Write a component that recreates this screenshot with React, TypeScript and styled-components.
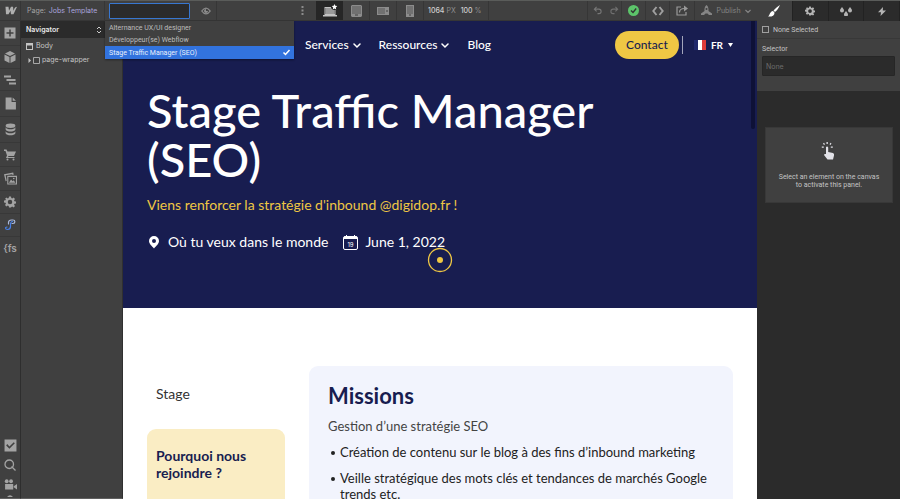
import React from "react";
import styled, { createGlobalStyle } from "styled-components";

const ui = `Inter, "Liberation Sans", sans-serif`;
const uiNarrow = `Roboto, "Liberation Sans", sans-serif`;
const site = `Lato, "Open Sans", sans-serif`;

const GlobalStyle = createGlobalStyle`
  *, *::before, *::after { box-sizing: border-box; }
  body { margin: 0; background: #2b2b2b; font-family: ${ui}; }
  button { border: 0; padding: 0; background: none; color: inherit; font: inherit; cursor: pointer; }
  ul, h1, h2, h3, p { margin: 0; padding: 0; list-style: none; font-weight: inherit; }
  a { color: inherit; text-decoration: none; }
`;

const Shell = styled.div`
  display: flex;
  height: 100vh;
  overflow: hidden;
  border-top: 1px solid #5a5c5a;
  color: #c4c4c4;
  font-size: 7px;
  line-height: 10px;
`;
const Workspace = styled.div`
  flex: 1;
  min-width: 0;
  display: flex;
  flex-direction: column;
`;
const TopBar = styled.header`
  display: flex;
  flex: none;
  height: 20px;
  background: #404040;
  border-bottom: 1px solid #363636;
`;
const Body = styled.div`
  flex: 1;
  min-height: 0;
  display: flex;
`;
const Cell = styled.div<{ $w: number }>`
  flex: none;
  width: ${(p) => p.$w}px;
`;
const BarButton = styled.button<{ $w: number; $line?: boolean; $active?: boolean; $color?: string }>`
  display: flex;
  flex: none;
  align-items: center;
  justify-content: center;
  gap: 4px;
  width: ${(p) => p.$w}px;
  border-right: ${(p) => (p.$line ? "1px solid #363636" : "0")};
  background: ${(p) => (p.$active ? "#262626" : "transparent")};
  color: ${(p) => p.$color || "#8c8c8c"};
`;
const Spacer = styled.div`
  flex: 1;
  border-right: 1px solid #363636;
`;
const PageLabel = styled.div`
  display: flex;
  flex: none;
  align-items: center;
  gap: 3px;
  width: 84px;
  padding-left: 6px;
  border-right: 1px solid #363636;
  color: #a4a4a4;
  white-space: nowrap;
`;
const PageName = styled.span`
  color: #aaa5dc;
`;
const Picker = styled.div`
  position: relative;
  flex: none;
  width: 90px;
  padding: 2px 4px;
`;
const PickerInput = styled.input`
  display: block;
  width: 81px;
  height: 16px;
  padding: 0 4px;
  border: 1px solid #3877d0;
  border-radius: 1px;
  outline: 0;
  background: #2b2b2b;
  color: #ddd;
  font: 7px ${ui};
`;
const Options = styled.ul`
  position: absolute;
  z-index: 5;
  top: 20px;
  left: 0;
  width: 189px;
  padding-top: 1px;
  background: #404040;
  color: #bdbdbd;
  box-shadow: 0 1px 2px rgba(0, 0, 0, 0.4);
  font-family: ${uiNarrow};
`;
const Option = styled.li<{ $selected?: boolean }>`
  display: flex;
  align-items: center;
  justify-content: space-between;
  height: ${(p) => (p.$selected ? 13 : 12)}px;
  padding: 0 3px 0 4px;
  background: ${(p) => (p.$selected ? "#3273de" : "transparent")};
  color: ${(p) => (p.$selected ? "#e8effc" : "inherit")};
`;
const Size = styled.div`
  display: flex;
  flex: none;
  align-items: center;
  gap: 5px;
  width: 65px;
  padding-left: 4px;
  border-right: 1px solid #363636;
  color: #8e8e8e;
  white-space: nowrap;
  b { font-weight: 500; color: #d0d0d0; }
`;
const Rail = styled.nav`
  display: flex;
  flex: none;
  flex-direction: column;
  width: 21px;
  background: #404040;
  border-right: 1px solid #2e2e2e;
  border-bottom: 1px solid #606060;
  overflow: hidden;
`;
const RailButton = styled.button<{ $h: number; $plain?: boolean }>`
  display: flex;
  flex: none;
  align-items: center;
  justify-content: center;
  height: ${(p) => p.$h}px;
  border-bottom: ${(p) => (p.$plain ? "0" : "1px solid #383838")};
  color: #a3a3a3;
  font-size: 10px;
  font-weight: 600;
`;
const RailGap = styled.div`
  flex: 1;
`;
const Navigator = styled.aside`
  flex: none;
  width: 102px;
  background: #404040;
  border-bottom: 1px solid #606060;
  border-right: 1px solid #303030;
`;
const NavHead = styled.h2`
  display: flex;
  align-items: center;
  justify-content: space-between;
  height: 17px;
  padding: 0 20px 0 5px;
  background: #2b2b2b;
  color: #e8e8e8;
  font-size: 7px;
  font-weight: 600;
`;
const TreeRow = styled.div<{ $depth?: number }>`
  display: flex;
  align-items: center;
  gap: ${(p) => (p.$depth ? 2 : 3)}px;
  height: 14px;
  padding-left: ${(p) => (p.$depth ? 7 : 5)}px;
`;
const Tree = styled.div`
  padding-top: 1px;
`;

/* canvas */
const Canvas = styled.main`
  position: relative;
  flex: 1;
  min-width: 0;
  overflow: hidden;
  background: #fff;
  color: #333;
  font-family: ${site};
`;
const ScrollThumb = styled.div`
  position: absolute;
  top: 0;
  right: 2px;
  width: 4px;
  height: 108px;
  border-radius: 0 0 2px 2px;
  background: #0e1137;
`;
const Hero = styled.section`
  position: relative;
  min-height: 287px;
  padding: 0 24px;
  background: #181d50;
  color: #fff;
`;
const SiteNav = styled.nav`
  display: flex;
  align-items: center;
  height: 48px;
  padding-left: 158px;
  font-size: 12px;
  line-height: 16px;
  font-weight: 500;
`;
const SiteLink = styled.a`
  display: flex;
  align-items: center;
  gap: 4px;
  margin-right: 18px;
`;
const Contact = styled.a`
  display: flex;
  align-items: center;
  justify-content: center;
  width: 64px;
  height: 28px;
  margin-left: auto;
  border-radius: 14px;
  background: #efc744;
  color: #181d50;
`;
const Language = styled.button`
  display: flex;
  align-items: center;
  gap: 5px;
  height: 18px;
  margin-left: 3px;
  padding-left: 11px;
  border-left: 1px solid #a3a5bb;
  font-size: 10px;
  font-weight: 700;
`;
const Title = styled.h1`
  max-width: 500px;
  padding-top: 17px;
  font-size: 47px;
  line-height: 49px;
  font-weight: 500;
`;
const Lead = styled.p`
  padding-top: 12px;
  color: #efc744;
  font-size: 14px;
  line-height: 18px;
`;
const Meta = styled.div`
  display: flex;
  align-items: center;
  gap: 15px;
  padding-top: 19px;
  font-size: 14px;
  line-height: 18px;
`;
const MetaItem = styled.span`
  display: flex;
  align-items: center;
  gap: 7px;
`;
const Pointer = styled.svg`
  position: absolute;
  left: 304px;
  top: 226px;
`;
const Content = styled.section`
  display: grid;
  grid-template-columns: 138px minmax(0, 1fr);
  gap: 24px;
  padding: 58px 24px 0;
`;
const Contract = styled.p`
  padding: 18px 9px 26px;
  font-size: 14px;
  line-height: 19px;
`;
const Why = styled.div`
  height: 120px;
  padding: 18px 9px;
  border-radius: 9px;
  background: #faedc4;
`;
const WhyTitle = styled.h3`
  color: #181d50;
  font-size: 14px;
  line-height: 17px;
  font-weight: 700;
`;
const Job = styled.article`
  min-height: 180px;
  padding: 17px 19px;
  border-radius: 9px;
  background: #f2f4fd;
  font-size: 13px;
  line-height: 16px;
`;
const JobTitle = styled.h2`
  color: #181d50;
  font-size: 22px;
  line-height: 26px;
  font-weight: 700;
`;
const Intro = styled.p`
  padding: 9px 0 10px;
  color: #444;
`;
const Task = styled.li`
  position: relative;
  margin-bottom: 10px;
  padding-left: 12px;
  color: #222;
  &::before {
    content: "";
    position: absolute;
    left: 3px;
    top: 7px;
    width: 4px;
    height: 4px;
    border-radius: 50%;
    background: #222;
  }
`;

/* style panel */
const Panel = styled.aside`
  flex: none;
  width: 143px;
  background: #2b2b2b;
  font-family: ${uiNarrow};
`;
const Tabs = styled.div`
  display: grid;
  grid-template-columns: repeat(4, 1fr);
  height: 20px;
`;
const Tab = styled.button<{ $active?: boolean }>`
  display: flex;
  align-items: center;
  justify-content: center;
  border-right: 1px solid #222;
  background: ${(p) => (p.$active ? "#404040" : "#2b2b2b")};
  color: ${(p) => (p.$active ? "#fff" : "#b4b4b4")};
`;
const Selection = styled.div`
  height: 70px;
  background: #404040;
`;
const SelectedRow = styled.label`
  display: flex;
  align-items: center;
  gap: 4px;
  height: 18px;
  padding-left: 5px;
  border-bottom: 1px solid #383838;
`;
const Tick = styled.input`
  appearance: none;
  width: 7px;
  height: 7px;
  margin: 0;
  border: 1px solid #a0a0a0;
`;
const SelectorLabel = styled.label`
  display: block;
  padding: 5px 5px 2px;
`;
const SelectorInput = styled.input`
  display: block;
  width: calc(100% - 10px);
  height: 20px;
  margin: 0 5px;
  padding: 0 3px;
  border: 1px solid #262626;
  border-radius: 1px;
  background: #2b2b2b;
  color: #ccc;
  font: 7px ${ui};
  &::placeholder { color: #6c6c6c; opacity: 1; }
`;
const Hint = styled.div`
  display: flex;
  flex-direction: column;
  align-items: center;
  gap: 13px;
  height: 76px;
  margin: 36px 7px 0 8px;
  padding-top: 14px;
  border: 1px solid #383838;
  background: #404040;
  line-height: 8px;
  text-align: center;
  p { width: 106px; }
`;

type IconProps = { w?: number; h?: number; box?: string; children: React.ReactNode };
const Icon = ({ w = 12, h = w, box = "0 0 24 24", children }: IconProps) => (
  <svg width={w} height={h} viewBox={box} fill="currentColor" aria-hidden="true">
    {children}
  </svg>
);
const Chevron = ({ w = 7 }: { w?: number }) => (
  <Icon w={w} h={w} box="0 0 8 8">
    <path d="M1 3 4 6 7 3" fill="none" stroke="currentColor" strokeWidth="1.5" strokeLinecap="round" />
  </Icon>
);
const Gear = ({ w = 12 }: { w?: number }) => (
  <Icon w={w}>
    <path
      fillRule="evenodd"
      d="M10 1h4l.6 3.2 1.9.8 2.7-1.9 2.8 2.8-1.9 2.7.8 1.9 3.1.5v4l-3.1.6-.8 1.9 1.9 2.7-2.8 2.8-2.7-1.9-1.9.8L14 23h-4l-.6-3.1-1.9-.8L4.8 21 2 18.2l1.9-2.7-.8-1.9L0 13V9l3.1-.5.8-1.900L2 5.900l2.800-2.800L7.500 5l1.900-.8ZM12 7.500a4.500 4.500 0 1 0 0 9 4.500 4.500 0 0 0 0-9Z"
    />
  </Icon>
);

const railItems: { label: string; h: number; icon: React.ReactNode }[] = [
  { label: "Add elements", h: 25, icon: <Icon><path fillRule="evenodd" d="M1 1h22v22H1Zm9.500 4v5.500H5v3h5.500V19h3v-5.500H19v-3h-5.500V5Z" /></Icon> },
  { label: "Symbols", h: 23, icon: <Icon><path d="m12 0 10 5-10 5L2 5ZM1 7l10 5v12L1 19Zm22 0-10 5v12l10-5Z" /></Icon> },
  { label: "Navigator", h: 22, icon: <Icon><path d="M0 3h14v4H0Zm5 7h18v4H5Zm5 7h14v4H10Z" /></Icon> },
  { label: "Pages", h: 26, icon: <Icon w={13}><path d="M3 1h11v8h8v14H3Zm13 0 6 6h-6Z" /></Icon> },
  { label: "CMS", h: 26, icon: <Icon w={13}><ellipse cx="12" cy="5" rx="9" ry="4" /><path d="M3 8c2 5 16 5 18 0v4c-2 5-16 5-18 0Zm0 7c2 5 16 5 18 0v4c-2 5-16 5-18 0Z" /></Icon> },
  { label: "Ecommerce", h: 24, icon: <Icon><path d="M0 1h5l2 4h17l-4 9H9l-1 2h13v2H4l2-5L3 4H0Z" /><circle cx="7" cy="21" r="2" /><circle cx="19" cy="21" r="2" /></Icon> },
  { label: "Assets", h: 24, icon: <Icon w={13}><path fillRule="evenodd" d="M0 4 17 1l1 4h-3v-1L3 6l2 10-2 1Zm6 3h18v16H6Zm2 2v12h14V9Z" /><path d="m9 20 4-6 3 3 2-2 3 5Z" /><circle cx="18" cy="12" r="1.500" /></Icon> },
  { label: "Settings", h: 23, icon: <Gear w={12} /> },
  { label: "Style guide", h: 23, icon: <Icon><g fill="none" strokeWidth="2.400" strokeLinecap="round"><path stroke="#a9b8dc" d="M9 10V7c0-3 2-5 6-5h3c5 0 5 7 0 7h-2" /><path stroke="#4880e8" d="M17 5c-3 0-4 3-4 6v4c0 4-3 6-6 6-5 0-5-5-1-5" /></g></Icon> },
  { label: "Finsweet", h: 22, icon: "{fs" },
];

const Laptop = () => (
  <Icon w={16} h={14} box="0 0 16 14">
    <path fillRule="evenodd" fill="#c2c2c2" d="M2.500 3H9v1H3.500v6h9V6h1v5H15v1.500H1V11h1.500Z" />
    <path fill="#999" d="M3.500 4H9l2 2h1.500v4h-9Z" />
    <path fill="#fff" d="m12.500 0 .8 1.800 2 .2-1.500 1.400.4 2-1.700-1-1.700 1 .4-2L9.700 2l2-.2Z" />
  </Icon>
);

export default function App() {
  return (
    <>
      <GlobalStyle />
      <Shell>
        <Workspace>
          <TopBar>
            <BarButton $w={21} $line $color="#b0b0b0" aria-label="Menu">
              <Icon w={13} h={9} box="0 0 26 17"><path d="M3 1h6l1 8 4-8h4l1 8 2-5q1-3 5-3l-7 15h-5l-1-7-4 7H4Z" /></Icon>
            </BarButton>
            <PageLabel>Page: <PageName>Jobs Template</PageName></PageLabel>
            <Picker>
              <PickerInput aria-label="Collection item" />
              <Options role="listbox" aria-label="Collection items">
                <Option role="option">Alternance UX/UI designer</Option>
                <Option role="option">Développeur(se) Webflow</Option>
                <Option role="option" aria-selected="true" $selected>
                  Stage Traffic Manager (SEO)
                  <Icon w={9} box="0 0 9 9"><path d="m1.500 4.500 2 2L7.500 2" fill="none" stroke="#fff" strokeWidth="1.500" /></Icon>
                </Option>
              </Options>
            </Picker>
            <BarButton $w={22} $line aria-label="Preview">
              <Icon w={10} h={8} box="0 0 20 16"><path fillRule="evenodd" d="M0 8Q10-6 20 8 10 22 0 8Zm3 0q7 9 14 0-7-9-14 0Z" /><path d="M10 4v4h4a4 4 0 1 1-4-4Z" /></Icon>
            </BarButton>
            <Cell $w={72} />
            <BarButton $w={27} aria-label="More">
              <Icon w={3} h={9} box="0 0 3 9"><path d="M.5 0h2v2h-2Zm0 3.500h2v2h-2Zm0 3.500h2v2h-2Z" /></Icon>
            </BarButton>
            <BarButton $w={27} $active aria-label="Desktop"><Laptop /></BarButton>
            <BarButton $w={27} $line aria-label="Tablet">
              <Icon w={11} h={12} box="0 0 11 12"><path fillRule="evenodd" d="M1 0h9l1 1v10l-1 1H1l-1-1V1ZM1 1.500v7h9v-7ZM4 9.500v1h3v-1Z" /><path opacity=".65" d="M1 1.500h9v7H1Z" /></Icon>
            </BarButton>
            <BarButton $w={27} $line aria-label="Mobile landscape">
              <Icon w={12} h={8} box="0 0 12 8"><path fillRule="evenodd" d="M0 0h12v8H0Zm1 1v6h7V1Zm8.500 2v2h1V3Z" /><path opacity=".65" d="M1 1h7v6H1Z" /></Icon>
            </BarButton>
            <BarButton $w={27} $line aria-label="Mobile portrait">
              <Icon w={8} h={12} box="0 0 8 12"><path fillRule="evenodd" d="M0 0h8v12H0Zm1 1.500v7h6v-7Zm2 8v1h2v-1Z" /><path opacity=".65" d="M1 1.500h6v7H1Z" /></Icon>
            </BarButton>
            <Size><span><b>1064</b> PX</span><span><b>100</b> %</span></Size>
            <Spacer />
            <BarButton $w={19} $color="#777" aria-label="Undo">
              <Icon w={9} h={9} box="0 0 10 10"><path d="M4 1 1.500 3.500 4 6M2 3.500h4.500a2.500 2.500 0 0 1 0 5H5" fill="none" stroke="currentColor" strokeWidth="1.200" /></Icon>
            </BarButton>
            <BarButton $w={15} $line $color="#707070" aria-label="Redo">
              <Icon w={9} h={9} box="0 0 10 10"><path d="m6 1 2.500 2.500L6 6M8 3.500H3.500a2.500 2.500 0 0 0 0 5H5" fill="none" stroke="currentColor" strokeWidth="1.200" /></Icon>
            </BarButton>
            <BarButton $w={24} $line aria-label="Saved">
              <Icon w={11} box="0 0 11 11"><circle cx="5.500" cy="5.500" r="5.500" fill="#5cc46a" /><path d="m3 5.500 2 2L8.200 3.500" fill="none" stroke="#333" strokeWidth="1.400" /></Icon>
            </BarButton>
            <BarButton $w={24} $line $color="#a0a0a0" aria-label="Code">
              <Icon w={12} h={10} box="0 0 12 10"><path d="M4.500 1 1.300 5l3.200 4M7.500 1l3.200 4-3.200 4" fill="none" stroke="currentColor" strokeWidth="1.900" /></Icon>
            </BarButton>
            <BarButton $w={25} $line $color="#999" aria-label="Share">
              <Icon w={12} h={11} box="0 0 12 11"><path d="M5 2H1v8h9V7M3.500 7.500c0-3 2-4 5-4" fill="none" stroke="currentColor" strokeWidth="1.200" /><path d="M8 .5 12 3.500 8 6.500Z" /></Icon>
            </BarButton>
            <BarButton $w={62} $color="#858585">
              <Icon w={11} h={11} box="0 0 11 11"><path fillRule="evenodd" d="M5.500 0C7.500 1.700 7.700 4 7.500 6L11 8.500V10H8L6.500 8.500h-2L3 10H0V8.500L3.500 6C3.300 4 3.500 1.700 5.500 0Zm0 3a1 1 0 1 0 0 2 1 1 0 0 0 0-2Z" /></Icon>
              Publish <Chevron w={6} />
            </BarButton>
          </TopBar>
          <Body>
            <Rail aria-label="Tools">
              {railItems.map((i) => (
                <RailButton key={i.label} $h={i.h} $plain={i.icon === "{fs"} aria-label={i.label}>{i.icon}</RailButton>
              ))}
              <RailGap />
              <RailButton $h={20} $plain aria-label="Audit"><Icon w={13}><path fillRule="evenodd" d="M1 1h22v22H1Zm5 8-2 3 6 6L20 8l-2-2-8 8Z" /></Icon></RailButton>
              <RailButton $h={20} $plain aria-label="Search"><Icon><g fill="none" stroke="currentColor" strokeWidth="2.600"><circle cx="10.500" cy="10.500" r="8.500" /><path d="m15 15 8 8" /></g></Icon></RailButton>
              <RailButton $h={19} $plain aria-label="Video tutorials"><Icon w={13}><circle cx="5" cy="6" r="3.500" /><circle cx="13" cy="6" r="3.500" /><path d="M2 11h15v10H2Zm16 4 6-4v10l-6-4Z" /></Icon></RailButton>
              <RailButton $h={4} $plain aria-label="Help"><Icon w={6} h={2} box="0 0 6 2"><path d="M0 2q3-3.500 6 0Z" /></Icon></RailButton>
            </Rail>
            <Navigator>
              <NavHead>
                Navigator
                <Icon w={6} h={8} box="0 0 6 8"><path d="m1 3 2-2 2 2M1 5l2 2 2-2" fill="none" stroke="#ccc" /></Icon>
              </NavHead>
              <Tree>
                <TreeRow>
                  <Icon w={7} h={7} box="0 0 7 7"><path fillRule="evenodd" d="M0 0h7v7H0Zm1 2.500V6h5V2.500Z" /></Icon>Body
                </TreeRow>
                <TreeRow $depth={1}>
                  <Icon w={3} h={5} box="0 0 3 5"><path d="m.5 0 2.500 2.500L.5 5Z" /></Icon>
                  <Icon w={7} h={7} box="0 0 7 7"><path d="M.5.5h6v6h-6Z" fill="none" stroke="#a8a8a8" /></Icon>page-wrapper
                </TreeRow>
              </Tree>
            </Navigator>
            <Canvas>
              <Hero>
                <SiteNav aria-label="Site">
                  <SiteLink href="#services">Services <Chevron w={8} /></SiteLink>
                  <SiteLink href="#ressources">Ressources <Chevron w={8} /></SiteLink>
                  <SiteLink href="#blog">Blog</SiteLink>
                  <Contact href="#contact">Contact</Contact>
                  <Language>
                    <Icon w={12} h={10} box="0 0 12 10"><path fill="#20286b" d="M0 0h4v10H0Z" /><path fill="#fff" d="M4 0h4v10H4Z" /><path fill="#dd3b3b" d="M8 0h4v10H8Z" /></Icon>
                    FR
                    <Icon w={5} h={4} box="0 0 5 4"><path d="M0 0h5L2.500 4Z" /></Icon>
                  </Language>
                </SiteNav>
                <Title>Stage Traffic Manager (SEO)</Title>
                <Lead>Viens renforcer la stratégie d'inbound @digidop.fr !</Lead>
                <Meta>
                  <MetaItem>
                    <Icon w={14} h={14} box="0 0 14 14"><path fillRule="evenodd" d="M7 1a5 5 0 0 1 5 5c0 3-3 5-5 7.500C5 11 2 9 2 6a5 5 0 0 1 5-5Zm0 3a2 2 0 1 0 0 4 2 2 0 0 0 0-4Z" /></Icon>
                    Où tu veux dans le monde
                  </MetaItem>
                  <MetaItem>
                    <Icon w={15} h={15} box="0 0 15 15">
                      <rect x=".5" y="1.500" width="14" height="13" rx="1.500" fill="none" stroke="currentColor" />
                      <path d="M1 1.500h13V4H1ZM3 0h1v2H3Zm8 0h1v2h-1Z" />
                      <text x="7.500" y="11.500" textAnchor="middle" fontSize="6" fontFamily="Inter" fontWeight="400">19</text>
                    </Icon>
                    June 1, 2022
                  </MetaItem>
                </Meta>
                <Pointer width="26" height="26" viewBox="0 0 26 26" aria-hidden="true">
                  <circle cx="13" cy="13" r="11.500" fill="none" stroke="#efc744" strokeWidth="1.300" />
                  <circle cx="13" cy="13" r="3" fill="#efc744" />
                </Pointer>
                <ScrollThumb />
              </Hero>
              <Content>
                <div>
                  <Contract>Stage</Contract>
                  <Why><WhyTitle>Pourquoi nous rejoindre ?</WhyTitle></Why>
                </div>
                <Job>
                  <JobTitle>Missions</JobTitle>
                  <Intro>Gestion d’une stratégie SEO</Intro>
                  <ul>
                    <Task>Création de contenu sur le blog à des fins d’inbound marketing</Task>
                    <Task>Veille stratégique des mots clés et tendances de marchés Google trends etc.</Task>
                  </ul>
                </Job>
              </Content>
            </Canvas>
          </Body>
        </Workspace>
        <Panel>
          <Tabs>
            <Tab $active aria-label="Style"><Icon w={12}><path d="M24 0c-3 7-6 11-10 14l-3-3C15 7 19 3 24 0ZM10 12l3 3c0 7-6 9-13 8 4-2 3-10 10-11Z" /></Icon></Tab>
            <Tab aria-label="Settings"><Gear w={10} /></Tab>
            <Tab aria-label="Style manager"><Icon w={12} h={10} box="0 0 24 20"><path d="M4 2c3 4 4 5 4 7a4 4 0 0 1-8 0c0-2 1-3 4-7Zm16 0c3 4 4 5 4 7a4 4 0 0 1-8 0c0-2 1-3 4-7Zm-8 8c3 4 4 5 4 7a4 4 0 0 1-8 0c0-2 1-3 4-7Z" /></Icon></Tab>
            <Tab aria-label="Interactions"><Icon w={8} h={9} box="0 0 8 9"><path d="M5 0 0 5.200h3L2.500 9 8 3.500H4.800Z" /></Icon></Tab>
          </Tabs>
          <Selection>
            <SelectedRow><Tick type="checkbox" />None Selected</SelectedRow>
            <SelectorLabel htmlFor="selector">Selector</SelectorLabel>
            <SelectorInput id="selector" placeholder="None" />
          </Selection>
          <Hint>
            <Icon w={16} h={18} box="0 0 16 18">
              <g fill="#e2e2e8"><path d="M5 5q1.500-1 2.200.5V10l4.800 1q1.500.5 1 2.500l-1 4H6.500L3 13q0-1.500 2-1Z" /><path d="M5.500 0h1.300v2H5.500ZM2 1.500l1-.8 1 1.500-1 .7ZM8.500 2.200l1-1.500 1 .8-1 1.400ZM.8 4.500h2v1.300h-2Zm9 0h2v1.300h-2Z" /></g>
            </Icon>
            <p>Select an element on the canvas to activate this panel.</p>
          </Hint>
        </Panel>
      </Shell>
    </>
  );
}
